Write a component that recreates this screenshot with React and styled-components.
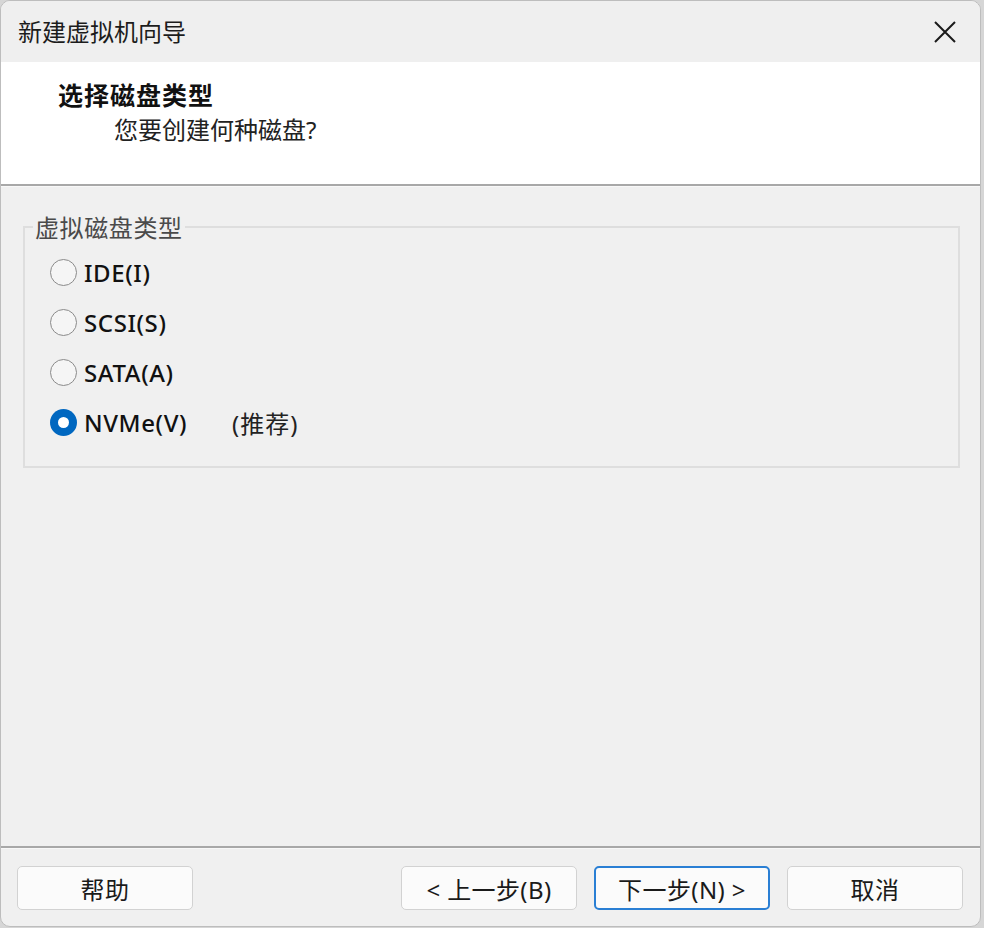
import React from 'react';
import styled, { createGlobalStyle } from 'styled-components';

const GlobalStyle = createGlobalStyle`
  html, body {
    margin: 0;
    padding: 0;
    background: #d6d6d6;
  }
  body {
    font-family: "Segoe UI", "Noto Sans", "Noto Sans CJK SC", sans-serif;
  }
`;

const cjk = `"Noto Sans CJK SC", "Noto Sans", sans-serif`;
const latin = `"Noto Sans", "Noto Sans CJK SC", sans-serif`;

const Window = styled.div`
  width: 981px;
  height: 927px;
  box-sizing: border-box;
  border: 1px solid #bdbdbd;
  border-radius: 10px;
  overflow: hidden;
  background: #f0f0f0;
  display: flex;
  flex-direction: column;
`;

const TitleBar = styled.div`
  height: 61px;
  flex: none;
  display: flex;
  align-items: center;
  justify-content: space-between;
  padding: 0 22px 0 17px;
  background: #efefef;
`;

const TitleText = styled.div`
  font-family: ${cjk};
  font-size: 24px;
  color: #1c1c1c;
  padding-bottom: 2px;
`;

const CloseButton = styled.div`
  width: 26px;
  height: 26px;
  display: flex;
  align-items: center;
  justify-content: center;
`;

const Header = styled.div`
  height: 124px;
  flex: none;
  background: #ffffff;
  border-bottom: 2px solid #a8a8a8;
  box-sizing: border-box;
  padding: 14px 0 0 57px;
`;

const HeaderTitle = styled.div`
  font-family: ${cjk};
  font-weight: 700;
  font-size: 25px;
  letter-spacing: 1px;
  line-height: 36px;
  color: #111;
`;

const HeaderSub = styled.div`
  font-family: ${latin};
  font-size: 24px;
  line-height: 36px;
  color: #222;
  padding-left: 56px;
`;

const Body = styled.div`
  flex: 1;
  padding: 26px 20px 0 22px;
  border-top: 1px solid #f8f8f8;
`;

const Group = styled.fieldset`
  margin: 0;
  border: 2px solid #dedede;
  padding: 6px 0 19px 8px;
`;

const Legend = styled.legend`
  font-family: ${cjk};
  font-size: 24px;
  letter-spacing: 0.6px;
  line-height: 28px;
  color: #4a4a4a;
  padding: 0 2px;
`;

const Option = styled.label`
  display: flex;
  align-items: center;
  height: 50px;
  gap: 7px;
  padding-left: 17px;
`;

const Radio = styled.span`
  width: 27px;
  height: 27px;
  box-sizing: border-box;
  border-radius: 50%;
  flex: none;
  display: flex;
  align-items: center;
  justify-content: center;
  border: ${({ checked }) => (checked ? 'none' : '1.5px solid #8a8a8a')};
  background: ${({ checked }) => (checked ? '#0067c0' : '#f5f5f5')};

  &::after {
    content: '';
    display: ${({ checked }) => (checked ? 'block' : 'none')};
    width: 11px;
    height: 11px;
    border-radius: 50%;
    background: #ffffff;
  }
`;

const OptionText = styled.span`
  font-family: ${latin};
  font-size: 24px;
  font-weight: 500;
  letter-spacing: 0.6px;
  color: #111;
  min-width: ${({ wide }) => (wide ? '141px' : 'auto')};
`;

const Note = styled.span`
  font-family: ${latin};
  font-size: 24px;
  letter-spacing: 1px;
  color: #222;
`;

const Footer = styled.div`
  height: 80px;
  flex: none;
  box-sizing: border-box;
  border-top: 2px solid #a8a8a8;
  box-shadow: inset 0 1px 0 #f8f8f8;
  display: flex;
  align-items: flex-start;
  padding: 18px 17px 0 16px;
`;

const Spacer = styled.div`
  flex: 1;
`;

const Button = styled.div`
  width: 176px;
  height: 44px;
  box-sizing: border-box;
  border-radius: 5px;
  border: ${({ primary }) => (primary ? '2px solid #2a7fd4' : '1px solid #d2d2d2')};
  background: #fbfbfb;
  display: flex;
  align-items: center;
  justify-content: center;
  font-family: ${latin};
  font-size: 24px;
  letter-spacing: 0.4px;
  color: #1a1a1a;
  margin-left: ${({ gap }) => gap || 0}px;
`;

const options = [
  { label: 'IDE(I)' },
  { label: 'SCSI(S)' },
  { label: 'SATA(A)' },
  { label: 'NVMe(V)', checked: true, note: '(推荐)' },
];

export default function App() {
  return (
    <>
      <GlobalStyle />
      <Window>
        <TitleBar>
          <TitleText>新建虚拟机向导</TitleText>
          <CloseButton>
            <svg width="24" height="24" viewBox="0 0 24 24">
              <path d="M2 2 L22 22 M22 2 L2 22" stroke="#1a1a1a" strokeWidth="2" fill="none" />
            </svg>
          </CloseButton>
        </TitleBar>

        <Header>
          <HeaderTitle>选择磁盘类型</HeaderTitle>
          <HeaderSub>您要创建何种磁盘?</HeaderSub>
        </Header>

        <Body>
          <Group>
            <Legend>虚拟磁盘类型</Legend>
            {options.map((o) => (
              <Option key={o.label}>
                <Radio checked={o.checked} />
                <OptionText wide={!!o.note}>{o.label}</OptionText>
                {o.note && <Note>{o.note}</Note>}
              </Option>
            ))}
          </Group>
        </Body>

        <Footer>
          <Button>帮助</Button>
          <Spacer />
          <Button>&lt; 上一步(B)</Button>
          <Button primary gap={17}>下一步(N) &gt;</Button>
          <Button gap={17}>取消</Button>
        </Footer>
      </Window>
    </>
  );
}
